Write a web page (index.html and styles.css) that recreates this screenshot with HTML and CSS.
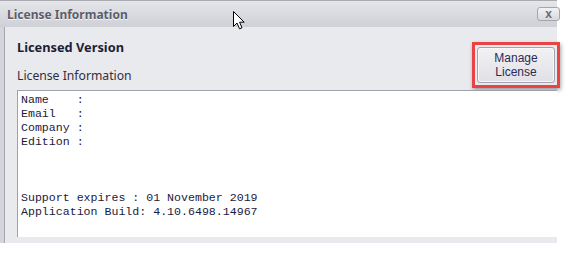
FILE: index.html
```html
<!DOCTYPE html>
<html lang="en">
<head>
    <meta charset="UTF-8">
    <meta name="viewport" content="width=device-width, initial-scale=1.0">
    <title>License Information</title>
    <link rel="stylesheet" href="styles.css">
</head>
<body>
    <div class="window">
        <div class="title-bar">
            <span class="title">License Information</span>
            <button class="close-btn">x</button>
        </div>
        <div class="content">
            <div class="header-row">
                <div class="labels">
                    <h2>Licensed Version</h2>
                    <div class="section-label">License Information</div>
                </div>
                <div class="highlight">
                    <button class="manage-btn">Manage<br>License</button>
                </div>
            </div>
            <pre class="info-box">Name    :
Email   :
Company :
Edition :



Support expires : 01 November 2019
Application Build: 4.10.6498.14967</pre>
        </div>
    </div>

    <svg class="cursor" width="14" height="21" viewBox="0 0 14 21">
        <path d="M1.5 1.5 L1.5 16.5 L5 13 L7.5 18.8 L10 17.8 L7.6 12.2 L12.2 12.2 Z" fill="#fff" stroke="#000" stroke-width="1"/>
    </svg>
</body>
</html>
```

FILE: styles.css
```css
body {
    margin: 0;
    background-color: #fff;
    font-family: 'Noto Sans', 'Open Sans', sans-serif;
    width: 573px;
    height: 253px;
    overflow: hidden;
    position: relative;
}
.window {
    width: 557px;
    height: 243px;
    display: flex;
    flex-direction: column;
    background-color: #d5d6dc;
}
.title-bar {
    height: 27px;
    flex-shrink: 0;
    display: flex;
    align-items: center;
    justify-content: space-between;
    padding: 0 0 0 7px;
    box-sizing: border-box;
    border-top: 1px solid #a9aab2;
    background: linear-gradient(#e5e6ea, #cfd0d6);
}
.title {
    font-size: 12px;
    font-weight: bold;
    color: #5c5d6a;
    text-shadow: 0 1px 0 #f4f4f6;
}
.close-btn {
    width: 23px;
    height: 14px;
    margin-top: -1px;
    margin-right: -3px;
    padding: 0;
    border: 1px solid #a4a5ae;
    border-radius: 3px;
    background: linear-gradient(#f2f2f4, #d8d9de);
    color: #6a6b75;
    font-family: 'Liberation Sans', sans-serif;
    font-size: 12px;
    font-weight: bold;
    line-height: 10px;
}
.content {
    flex: 1;
    margin-left: 4px;
    border-left: 1px solid #a5a6b0;
    background-color: #e9eaee;
    padding: 0 0 0 12px;
    display: flex;
    flex-direction: column;
}
.header-row {
    display: flex;
    justify-content: space-between;
    align-items: flex-start;
}
.labels {
    padding-top: 11px;
}
h2 {
    margin: 0;
    font-size: 12.8px;
    font-weight: bold;
    color: #1d1d35;
    line-height: 18px;
}
.section-label {
    margin-top: 11px;
    font-size: 12.2px;
    color: #2f2f3f;
    line-height: 17px;
}
.highlight {
    margin-top: 15px;
    margin-right: -3px;
    padding: 2px;
    border: 3px solid #e84444;
    box-shadow: 1px 2px 4px rgba(0,0,0,0.35);
    background-color: #e9eaee;
}
.manage-btn {
    display: block;
    width: 78px;
    height: 36px;
    padding: 0;
    border: 1px solid #a2a3ac;
    border-radius: 3px;
    background: linear-gradient(#f2f2f4, #e0e1e6);
    box-shadow: inset 0 0 0 1px #f8f8fa;
    font-family: 'Liberation Sans', sans-serif;
    font-size: 12px;
    line-height: 14px;
    color: #2b2b55;
}
.info-box {
    flex: 1;
    margin: 2px 0 6px 0;
    padding: 2px 3px;
    border-top: 1px solid #a0a1ad;
    border-left: 1px solid #a0a1ad;
    background-color: #fff;
    font-family: 'Liberation Mono', monospace;
    font-size: 11.6px;
    line-height: 14px;
    color: #1a1a40;
    white-space: pre;
}
.cursor {
    position: absolute;
    left: 232px;
    top: 10px;
}
```
